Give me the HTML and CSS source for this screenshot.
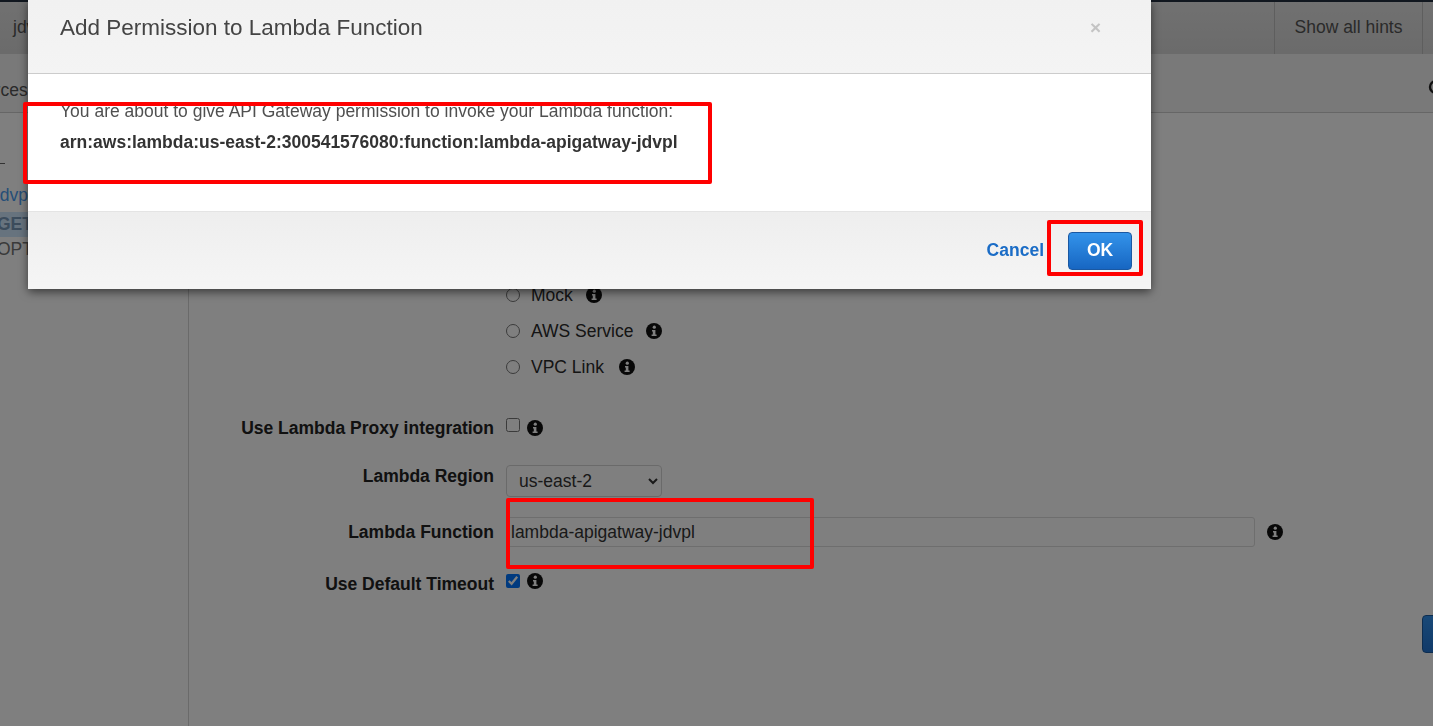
FILE: index.html
```html
<!DOCTYPE html>
<html lang="en">
<head>
<meta charset="utf-8">
<title>API Gateway - Method Setup</title>
<link rel="stylesheet" href="styles.css">
</head>
<body>
<div class="page">
  <header class="topbar">
    <div class="api-name">jdvpl-api</div>
    <div class="spacer"></div>
    <div class="hints">Show all hints</div>
    <div class="tb-cell"></div>
  </header>
  <div class="subbar">
    <div class="subbar-title">Resources</div>
    <div class="spacer"></div>
    <svg class="edit-icon" width="16" height="16" viewBox="0 0 16 16"><circle cx="8" cy="8" r="6" fill="none" stroke="#222" stroke-width="2.4"/></svg>
  </div>
  <div class="main">
    <aside class="sidebar">
      <div class="tree-line"></div>
      <div class="tree-item res">/jdvpl</div>
      <div class="tree-item method active">GET</div>
      <div class="tree-item method opt">OPTIONS</div>
    </aside>
    <section class="content">
      <div class="intro">
        <h2 class="setup-title">/jdvpl - GET - Setup</h2>
        <p class="setup-desc">Choose the integration point for your new method.</p>
      </div>
      <div class="field field-integration">
        <div class="label label-first">Integration type</div>
        <div class="radios">
          <label class="radio"><input type="radio" name="it" checked><span>Lambda Function</span><svg class="info" viewBox="0 0 16 16"><circle cx="8" cy="8" r="8" fill="#111"/><circle cx="8.3" cy="4.2" r="1.6" fill="#fff"/><path d="M6 6.9h3.4v4.6h1.2v1.6H5.6v-1.6h1.2V8.5H6z" fill="#fff"/></svg></label>
          <label class="radio"><input type="radio" name="it"><span>HTTP</span><svg class="info" viewBox="0 0 16 16"><circle cx="8" cy="8" r="8" fill="#111"/><circle cx="8.3" cy="4.2" r="1.6" fill="#fff"/><path d="M6 6.9h3.4v4.6h1.2v1.6H5.6v-1.6h1.2V8.5H6z" fill="#fff"/></svg></label>
          <label class="radio"><input type="radio" name="it"><span>Mock</span><svg class="info" viewBox="0 0 16 16"><circle cx="8" cy="8" r="8" fill="#111"/><circle cx="8.3" cy="4.2" r="1.6" fill="#fff"/><path d="M6 6.9h3.4v4.6h1.2v1.6H5.6v-1.6h1.2V8.5H6z" fill="#fff"/></svg></label>
          <label class="radio"><input type="radio" name="it"><span>AWS Service</span><svg class="info" viewBox="0 0 16 16"><circle cx="8" cy="8" r="8" fill="#111"/><circle cx="8.3" cy="4.2" r="1.6" fill="#fff"/><path d="M6 6.9h3.4v4.6h1.2v1.6H5.6v-1.6h1.2V8.5H6z" fill="#fff"/></svg></label>
          <label class="radio"><input type="radio" name="it"><span>VPC Link</span><svg class="info info-wide" viewBox="0 0 16 16"><circle cx="8" cy="8" r="8" fill="#111"/><circle cx="8.3" cy="4.2" r="1.6" fill="#fff"/><path d="M6 6.9h3.4v4.6h1.2v1.6H5.6v-1.6h1.2V8.5H6z" fill="#fff"/></svg></label>
        </div>
      </div>
      <div class="field field-proxy">
        <div class="label">Use Lambda Proxy integration</div>
        <div class="ctrl">
          <input class="check check-raise" type="checkbox">
          <svg class="info info-near" viewBox="0 0 16 16"><circle cx="8" cy="8" r="8" fill="#111"/><circle cx="8.3" cy="4.2" r="1.6" fill="#fff"/><path d="M6 6.9h3.4v4.6h1.2v1.6H5.6v-1.6h1.2V8.5H6z" fill="#fff"/></svg>
        </div>
      </div>
      <div class="field field-region">
        <div class="label label-top">Lambda Region</div>
        <div class="ctrl">
          <select class="select"><option>us-east-2</option></select>
        </div>
      </div>
      <div class="field field-function">
        <div class="label">Lambda Function</div>
        <div class="ctrl">
          <input class="text-input" type="text" value="lambda-apigatway-jdvpl">
          <svg class="info info-input" viewBox="0 0 16 16"><circle cx="8" cy="8" r="8" fill="#111"/><circle cx="8.3" cy="4.2" r="1.6" fill="#fff"/><path d="M6 6.9h3.4v4.6h1.2v1.6H5.6v-1.6h1.2V8.5H6z" fill="#fff"/></svg>
        </div>
      </div>
      <div class="field field-timeout">
        <div class="label">Use Default Timeout</div>
        <div class="ctrl ctrl-top">
          <input class="check" type="checkbox" checked>
          <svg class="info info-near" viewBox="0 0 16 16"><circle cx="8" cy="8" r="8" fill="#111"/><circle cx="8.3" cy="4.2" r="1.6" fill="#fff"/><path d="M6 6.9h3.4v4.6h1.2v1.6H5.6v-1.6h1.2V8.5H6z" fill="#fff"/></svg>
        </div>
      </div>
      <div class="actions">
        <button class="save-btn">Save</button>
      </div>
    </section>
  </div>
</div>

<div class="overlay"></div>

<div class="modal">
  <div class="modal-header">
    <h3 class="modal-title">Add Permission to Lambda Function</h3>
    <span class="modal-close">×</span>
  </div>
  <div class="modal-body">
    <p class="msg">You are about to give API Gateway permission to invoke your Lambda function:</p>
    <p class="arn">arn:aws:lambda:us-east-2:300541576080:function:lambda-apigatway-jdvpl</p>
  </div>
  <div class="modal-footer">
    <a class="cancel">Cancel</a>
    <button class="ok-btn">OK</button>
  </div>
</div>

<div class="mark mark-arn"></div>
<div class="mark mark-ok"></div>
<div class="mark mark-fn"></div>
</body>
</html>
```

FILE: styles.css
```css
* { box-sizing: border-box; }

html, body {
  margin: 0;
  padding: 0;
}

body {
  width: 1433px;
  height: 726px;
  overflow: hidden;
  position: relative;
  background: #fff;
  font-family: "Liberation Sans", Arial, Helvetica, sans-serif;
  font-size: 17.5px;
  color: #222;
}

.page {
  width: 1433px;
  height: 726px;
  display: flex;
  flex-direction: column;
}

.spacer { flex: 1; }

/* top bar */
.topbar {
  height: 54px;
  flex-shrink: 0;
  border-top: 2px solid #232f3e;
  background: linear-gradient(#e2e2e2, #d6d6d6);
  display: flex;
  align-items: stretch;
}

.api-name {
  padding-left: 13px;
  line-height: 50px;
  color: #555;
  white-space: nowrap;
}

.hints {
  width: 148px;
  border-left: 1px solid #bdbdbd;
  display: flex;
  align-items: center;
  justify-content: center;
  color: #555;
  padding-bottom: 2px;
}

.tb-cell {
  width: 11px;
  border-left: 1px solid #bdbdbd;
}

/* sub bar */
.subbar {
  height: 59px;
  flex-shrink: 0;
  background: #f3f3f3;
  border-bottom: 1px solid #cdcdcd;
  display: flex;
  align-items: flex-start;
  padding-top: 26px;
}

.subbar-title {
  line-height: 20px;
  color: #555;
  text-indent: -56px;
  white-space: nowrap;
}

.edit-icon {
  margin-right: -11px;
  margin-top: -1px;
}

/* main */
.main {
  flex: 1;
  display: flex;
  min-height: 0;
}

.sidebar {
  width: 189px;
  flex-shrink: 0;
  border-right: 1px solid #d4d4d4;
  overflow: hidden;
}

.tree-line {
  width: 5px;
  height: 1px;
  background: #666;
  margin-top: 50px;
}

.tree-item {
  height: 25px;
  line-height: 25px;
  white-space: nowrap;
}

.res {
  margin-top: 19px;
  color: #4a9cf0;
  text-indent: -9px;
}

.method {
  text-indent: -3px;
}

.active {
  margin-top: 4px;
  background: #cfe6fd;
  color: #7898b8;
  font-weight: bold;
}

.opt {
  color: #747474;
}

/* content */
.content {
  flex: 1;
  padding-top: 20px;
  min-width: 0;
}

.intro {
  padding-left: 40px;
  margin-bottom: 6px;
}

.setup-title {
  margin: 0 0 12px;
  font-size: 22.5px;
  line-height: 30px;
  font-weight: normal;
  color: #333;
}

.setup-desc {
  margin: 0;
  line-height: 24px;
  color: #444;
}

.field {
  display: grid;
  grid-template-columns: 305px auto;
  column-gap: 12px;
  align-items: center;
}

.label {
  text-align: right;
  font-weight: bold;
  color: #222;
  line-height: 22px;
  white-space: nowrap;
}

.label-top { align-self: start; }

.label-first {
  align-self: start;
  padding-top: 7px;
}

.radios {
  display: flex;
  flex-direction: column;
}

.radio {
  height: 36px;
  display: flex;
  align-items: center;
  color: #2a2a2a;
}

.radio input {
  width: 14px;
  height: 14px;
  margin: 0 11px 0 0;
}

.info {
  width: 16px;
  height: 16px;
  flex-shrink: 0;
  margin-left: 13px;
}

.info-wide { margin-left: 15px; }
.info-near { margin-left: 7px; }
.info-input { margin-left: 12px; }

.ctrl {
  display: flex;
  align-items: center;
}

.ctrl-top {
  align-self: start;
  padding-top: 4px;
}

.check {
  width: 14px;
  height: 14px;
  margin: 0;
}

.check-raise { margin-top: -7px; }

.field-proxy {
  height: 36px;
  margin-top: 25px;
}

.field-region {
  height: 32px;
  margin-top: 19px;
}

.select {
  width: 156px;
  height: 32px;
  border: 1px solid #d5d5d5;
  border-radius: 4px;
  background: #fff;
  padding: 0 6px 0 8px;
  font-family: inherit;
  font-size: 17.5px;
  color: #333;
}

.field-function {
  height: 30px;
  margin-top: 20px;
}

.text-input {
  width: 749px;
  height: 30px;
  border: 1px solid #dcdcdc;
  border-radius: 3px;
  padding: 0 4px;
  font-family: inherit;
  font-size: 17.5px;
  color: #333;
  background: #fff;
}

.field-timeout {
  height: 30px;
  margin-top: 22px;
}

.actions {
  display: flex;
  justify-content: flex-end;
  margin-top: 16px;
}

.save-btn {
  width: 67px;
  height: 38px;
  margin-right: -56px;
  border: 1px solid #1a5aa0;
  border-radius: 4px;
  background: linear-gradient(#3192f0, #2274d2);
  color: #fff;
  font-family: inherit;
  font-weight: bold;
  font-size: 17.5px;
}

/* overlay + modal */
.overlay {
  position: fixed;
  inset: 0;
  background: rgba(0, 0, 0, 0.5);
}

.modal {
  position: absolute;
  top: 0;
  left: 28px;
  width: 1123px;
  background: #fff;
  border-radius: 0 0 3px 3px;
  box-shadow: 0 3px 10px rgba(0, 0, 0, 0.55);
}

.modal-header {
  height: 74px;
  padding: 13px 50px 0 32px;
  display: flex;
  align-items: flex-start;
  justify-content: space-between;
  background: linear-gradient(#f1f1f1, #f4f4f4);
  border-bottom: 1px solid #cccccc;
}

.modal-title {
  margin: 0;
  font-size: 22.5px;
  line-height: 30px;
  font-weight: normal;
  color: #444;
}

.modal-close {
  font-size: 19px;
  line-height: 30px;
  color: #c4c4c4;
  font-weight: bold;
}

.modal-body {
  height: 137px;
  padding: 22px 32px 0;
}

.modal-body p {
  margin: 0;
  line-height: 31px;
}

.msg { color: #505050; }

.arn {
  font-weight: bold;
  color: #333;
}

.modal-footer {
  height: 78px;
  border-top: 1px solid #e4e4e4;
  background: linear-gradient(#eeeeee, #f5f5f5);
  display: flex;
  align-items: center;
  justify-content: flex-end;
  padding: 0 19px 0 0;
}

.cancel {
  color: #1a6cc6;
  font-weight: bold;
  margin-right: 24px;
  cursor: pointer;
}

.ok-btn {
  width: 64px;
  height: 38px;
  border: 1px solid #1a58a2;
  border-radius: 4px;
  background: linear-gradient(#3393ea, #1766c2);
  color: #fff;
  font-family: inherit;
  font-weight: bold;
  font-size: 17.5px;
  padding: 0;
}

/* red annotations */
.mark {
  position: absolute;
  border: 4px solid #ff0000;
  border-radius: 2px;
}

.mark-arn { left: 23px; top: 102px; width: 689px; height: 82px; }
.mark-ok  { left: 1047px; top: 220px; width: 96px; height: 56px; }
.mark-fn  { left: 506px; top: 498px; width: 308px; height: 71px; }
```
